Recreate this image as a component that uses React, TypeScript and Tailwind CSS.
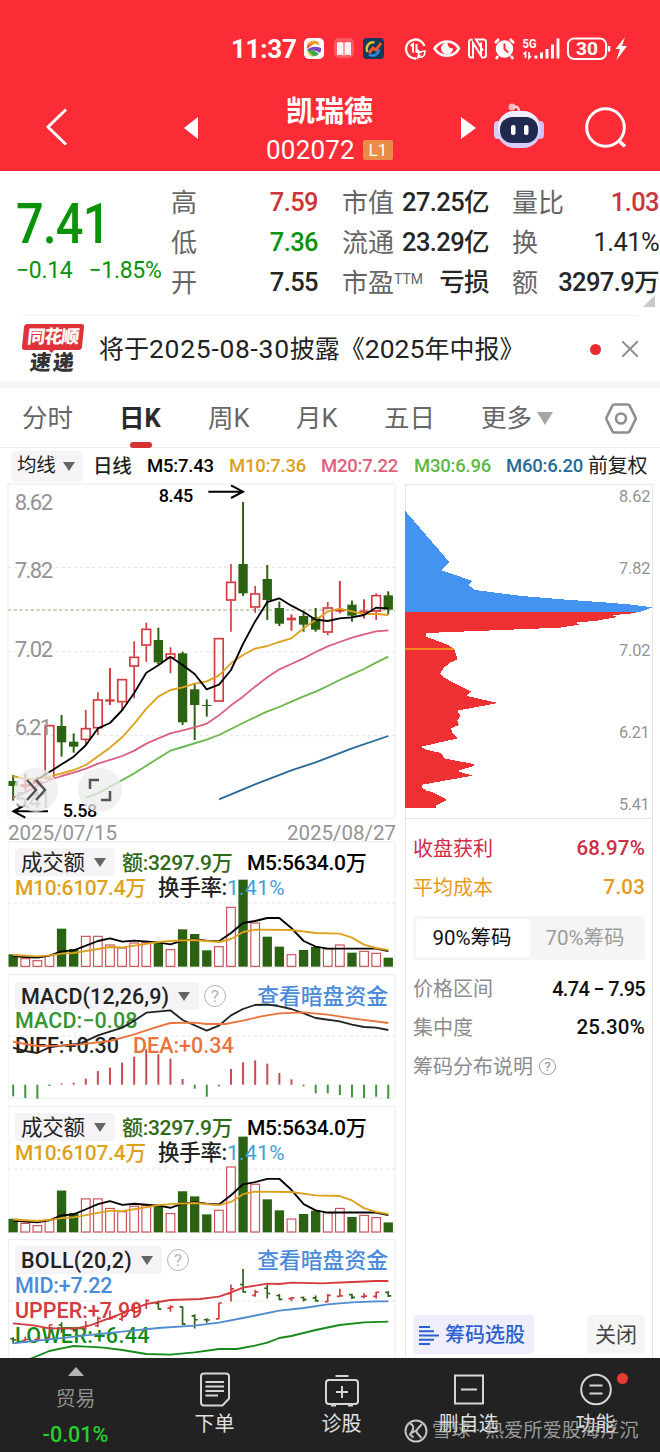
import type { ReactNode } from "react"

type Pt = [number, number]

// charts are drawn at three units per pixel
const cx = (i: number) => 39.5 + i * 36.3

const RED = "#d33b3f"
const GREEN = "#2b6312"

// up, high, low, body top, body bottom
const candles: [boolean, number, number, number, number][] = [
  [false, 885, 962, 903, 918],
  [true, 880, 932, 912, 922],
  [true, 890, 922, 902, 912],
  [true, 735, 897, 735, 897],
  [false, 705, 830, 738, 787],
  [false, 760, 818, 785, 800],
  [true, 690, 795, 744, 780],
  [true, 637, 765, 658, 745],
  [true, 564, 675, 658, 665],
  [true, 597, 690, 597, 667],
  [true, 484, 655, 530, 560],
  [true, 428, 545, 446, 497],
  [false, 443, 553, 480, 547],
  [true, 502, 580, 520, 535],
  [false, 515, 735, 520, 727],
  [false, 610, 780, 628, 675],
  [false, 658, 710, 675, 678],
  [true, 474, 665, 474, 665],
  [true, 252, 455, 305, 362],
  [false, 66, 348, 252, 340],
  [true, 318, 398, 340, 383],
  [false, 255, 420, 297, 360],
  [false, 365, 438, 384, 431],
  [true, 403, 452, 413, 421],
  [false, 395, 455, 408, 434],
  [false, 384, 455, 412, 449],
  [true, 366, 466, 382, 458],
  [true, 303, 400, 388, 395],
  [false, 362, 425, 374, 407],
  [true, 358, 416, 392, 398],
  [true, 340, 420, 345, 395],
  [false, 334, 403, 346, 389],
]

const volumeTops = [
  344, 355, 361, 346, 267, 328, 288, 288, 314, 323, 308, 306, 306, 328, 269, 283, 332, 319, 201, 120, 248, 291, 321,
  343, 331, 322, 326, 314, 339, 333, 339, 354,
]

const macdTips = [
  769, 774, 776, 738, 730, 728, 716, 693, 683, 668, 650, 628, 643, 656, 717, 746, 770, 739, 687, 667, 661, 671, 699,
  718, 739, 760, 760, 765, 772, 774, 770, 776,
]

const m5: Pt[] = [[100, 905], [145, 878], [185, 853], [221, 830], [258, 795], [294, 745], [330, 729], [367, 690], [403, 638], [439, 578], [475, 556], [511, 530], [548, 555], [584, 582], [620, 628], [657, 614], [693, 570], [729, 492], [765, 425], [802, 366], [838, 355], [874, 377], [911, 396], [947, 419], [983, 423], [1019, 415], [1056, 412], [1092, 405], [1128, 383], [1165, 385]]
const m10: Pt[] = [[39, 888], [75, 897], [112, 896], [148, 890], [185, 880], [221, 870], [258, 855], [294, 829], [330, 803], [367, 771], [403, 731], [439, 686], [475, 650], [511, 630], [548, 622], [584, 611], [620, 604], [657, 586], [693, 550], [729, 525], [765, 506], [802, 498], [838, 486], [874, 475], [911, 445], [947, 420], [983, 395], [1019, 386], [1056, 394], [1092, 402], [1128, 402], [1165, 405]]
const m20: Pt[] = [[39, 953], [75, 938], [112, 918], [148, 900], [185, 888], [221, 878], [258, 866], [294, 851], [367, 828], [403, 812], [439, 791], [475, 775], [511, 760], [548, 751], [584, 742], [620, 731], [657, 706], [693, 676], [729, 650], [765, 620], [802, 592], [838, 568], [874, 552], [911, 535], [947, 516], [983, 499], [1019, 486], [1056, 473], [1092, 463], [1128, 454], [1165, 451]]
const m30: Pt[] = [[258, 952], [294, 940], [330, 920], [367, 900], [403, 880], [439, 857], [511, 812], [548, 801], [620, 779], [657, 765], [729, 729], [802, 694], [838, 681], [874, 665], [911, 649], [947, 635], [983, 618], [1019, 600], [1056, 583], [1092, 567], [1128, 548], [1165, 530]]
const m60: Pt[] = [[657, 958], [765, 913], [874, 871], [947, 847], [1056, 805], [1165, 768]]

const volM5: Pt[] = [[39, 349], [75, 352], [112, 354], [148, 348], [185, 335], [221, 332], [258, 318], [294, 304], [330, 296], [367, 306], [403, 303], [475, 308], [511, 314], [548, 303], [584, 299], [620, 303], [657, 305], [693, 280], [729, 250], [765, 244], [802, 235], [838, 235], [874, 265], [911, 304], [947, 321], [983, 327], [1128, 327], [1165, 334]]
const volM10: Pt[] = [[39, 346], [112, 350], [148, 347], [185, 342], [221, 340], [294, 328], [330, 322], [367, 323], [403, 318], [475, 307], [511, 304], [584, 301], [657, 307], [693, 298], [729, 277], [765, 270], [874, 271], [947, 280], [1019, 282], [1056, 294], [1092, 315], [1128, 325], [1165, 331]]

const diff: Pt[] = [[39, 623], [75, 633], [112, 639], [148, 622], [185, 617], [240, 611], [294, 586], [367, 563], [403, 542], [439, 518], [511, 511], [548, 540], [620, 572], [657, 557], [693, 526], [729, 507], [765, 495], [802, 493], [838, 499], [874, 507], [911, 520], [947, 534], [1019, 544], [1056, 554], [1092, 561], [1128, 563], [1165, 570]]
const dea: Pt[] = [[39, 605], [75, 612], [112, 618], [185, 617], [240, 613], [330, 603], [403, 583], [457, 565], [511, 549], [584, 548], [620, 552], [675, 552], [729, 542], [784, 529], [838, 520], [911, 517], [983, 524], [1056, 535], [1165, 549]]

const bollUpper: Pt[] = [[39, 670], [100, 676], [148, 685], [230, 685], [270, 676], [294, 667], [367, 640], [439, 612], [511, 600], [600, 597], [657, 590], [693, 577], [729, 563], [802, 551], [838, 552], [874, 548], [965, 550], [1056, 546], [1128, 543], [1165, 543]]
const bollMid: Pt[] = [[39, 730], [148, 718], [258, 706], [367, 695], [475, 684], [584, 677], [657, 668], [729, 654], [838, 632], [911, 624], [983, 613], [1056, 607], [1128, 604], [1165, 604]]
const bollLower: Pt[] = [[90, 777], [148, 753], [185, 745], [221, 738], [258, 740], [310, 743], [367, 750], [439, 762], [511, 764], [584, 757], [657, 747], [711, 747], [765, 737], [802, 728], [838, 714], [874, 708], [947, 690], [1019, 675], [1092, 667], [1165, 665]]

const chipsBlue = "31,93 163,246 138,270 232,303 221,316 240,330 380,348 500,358 640,368 700,373 772,382 738,395 31,395"
const chipsRed =
  "31,395 738,395 700,402 650,405 669,411 605,422 540,428 553,434 495,443 320,450 93,459 93,470 160,495 178,508 188,538 165,548 145,565 135,580 145,592 228,635 216,648 309,669 187,692 197,708 187,720 191,735 168,745 172,760 189,775 78,800 90,808 138,819 150,836 237,852 237,858 186,873 232,887 82,914 80,922 95,933 110,935 157,960 125,975 122,983 31,983"

function Line({ pts, color, w = 5.5 }: { pts: Pt[]; color: string; w?: number }) {
  return <polyline points={pts.map((p) => p.join(",")).join(" ")} fill="none" stroke={color} strokeWidth={w} strokeLinejoin="round" />
}

function Dash({ y }: { y: number }) {
  return <path d={`M24 ${y}H1185`} stroke="#e4e4e4" strokeWidth="3" strokeDasharray="9 9" />
}

function StatusBar() {
  return (
    <div className="flex h-[76px] items-end pl-[231px]">
      <span className="mb-[12px] w-[73px] text-[26px] leading-[30px] font-bold tracking-[-0.3px]">11:37</span>
      <svg className="mb-[12px] h-8 w-[330px]" viewBox="304 32 330 32" fill="none">
        <rect x="304" y="38" width="20" height="21" rx="5" fill="#fff" />
        <path d="M307 49a7 7 0 0 1 12-6c-4 0-8 2-12 6Z" fill="#ef5a3c" />
        <path d="M308 45a7.500 7.500 0 0 1 8-4l5 5c-6-3-9-2-13-1Z" fill="#f3a52b" />
        <path d="M307 50c4-4 9-4 14-2a8 8 0 0 1-1 5c-4-3-8-3-13-3Z" fill="#7948c2" />
        <path d="M307 50c5 0 8 0 12 4a7 7 0 0 1-9 1Z" fill="#3aa655" />
        <path d="M307 50a8 8 0 0 0 7 7Z" fill="#f6c52d" />
        <rect x="334" y="38" width="20" height="20" rx="5" fill="#ff5960" />
        <path d="M337 42.500c2-.8 4.500-.8 6.500.5v12.500c-2-1-4.500-1-6.500 0ZM344.500 43c2-1.300 4.500-1.300 6.500-.5v13c-2-1-4.500-1-6.500 0Z" fill="#ffeef2" />
        <rect x="363" y="38" width="21" height="21" rx="4" fill="#143a5c" />
        <path d="M367.500 52a6.500 6.500 0 0 1 7-9.500" stroke="#d8c52f" strokeWidth="2.500" />
        <path d="M369 54.500a6.500 6.500 0 0 0 10-5" stroke="#2a8bd8" strokeWidth="2.500" />
        <path d="m369 53 4-5 3 2 5-7" stroke="#ef5a28" strokeWidth="3" />

        <g stroke="#fff" strokeWidth="2">
          <path d="M424.500 46a9.500 9.500 0 1 0-8.500 12.500" strokeWidth="2.300" />
          <path d="m410.500 46 2.500-2v8.500M416.500 44v8h3l-2.500-2" />
          <path d="M418 57c0-4 2-6 7-6 0 5-2.500 7-7 6Zm-1.500 2 4-4" strokeWidth="1.600" />
          <path d="M434.500 48.500c6-9.500 19-9.500 24.500 0-5.500 9.500-18.500 9.500-24.500 0Z" strokeWidth="2.500" />
          <path d="M447 43a5.500 5.500 0 1 0 5.500 5.500c-2 1-5-1-5.500-5.500Z" fill="#fff" strokeWidth="1" />
          <path d="M472.500 39.500h-1c-1.500 0-2.500 1-2.500 2.500v13c0 1.500 1 2.500 2.500 2.500h1.500V43l8 12.500V42.500M482 57.500h1.500c1.500 0 2.500-1 2.500-2.500V42c0-1.500-1-2.500-2.500-2.500H476l7 11" strokeWidth="2" />
        </g>
        <circle cx="504.500" cy="49" r="8.700" fill="#fff" />
        <path d="m495 43 4-4M514 43l-4-4M498 56l-2 3M511 56l2 3" stroke="#fff" strokeWidth="2.500" />
        <path d="M504.500 43.500V49l3.500 3.500" stroke="#fb2c36" strokeWidth="2" />
        <text x="522.500" y="48" fontSize="12.500" fontWeight="700" fill="#fff" textLength="14" lengthAdjust="spacingAndGlyphs">5G</text>
        <path d="m523.500 54 2-1.500V58M529 52v6l2-2" stroke="#fff" strokeWidth="1.700" />
        <path d="M536 55.500V58.500M541.500 52.500v6M547 49v9.500M552.500 44.500v14M558 38.500v20" stroke="#fff" strokeWidth="2.900" />
        <rect x="568" y="38.500" width="38" height="20.500" rx="6" stroke="#fff" strokeWidth="2" />
        <text x="576" y="55" fontSize="18" fontWeight="700" fill="#fff" textLength="22" lengthAdjust="spacingAndGlyphs">30</text>
        <path d="M609 46v5.500" stroke="#fff" strokeWidth="2.500" />
        <path d="m625 37-9.500 12h4.500l-3.500 11 10.500-14H622Z" fill="#fff" />
      </svg>
    </div>
  )
}

function Header() {
  return (
    <header className="h-[171px] bg-[#fb2c36] text-white">
      <StatusBar />
      <div className="flex h-[95px] items-start">
        <svg className="mt-[31px] ml-[45px] h-10 w-6" viewBox="0 0 24 40" fill="none" stroke="#fff" strokeWidth="3">
          <path d="M21 2.500 3 20l18 17.500" />
        </svg>
        <svg className="mt-[41px] ml-[115px] h-[22px] w-[14px]" viewBox="0 0 14 22">
          <path d="M14 0v22L0 11Z" fill="#fff" />
        </svg>
        <div className="flex w-[263px] flex-col items-center">
          <h1 className="mt-[19px] text-[29px] leading-[34px] font-semibold">凯瑞德</h1>
          <div className="mt-[6px] flex items-center gap-2">
            <span className="text-[26px] leading-[30px] tracking-[0.2px]">002072</span>
            <span className="flex h-5 w-[30px] items-center justify-center rounded-xs bg-[#e88c48] text-[17px] leading-5">L1</span>
          </div>
        </div>
        <svg className="mt-[41px] h-[22px] w-[15px]" viewBox="0 0 15 22">
          <path d="M0 0v22l15-11Z" fill="#fff" />
        </svg>
        <svg className="mt-[26px] ml-[17px] h-[48px] w-[52px]" viewBox="0 0 52 48">
          <circle cx="19" cy="5" r="3.500" fill="#f8b2b9" />
          <path d="M20 5c5-1 6 1 6.500 6" stroke="#fbd7de" strokeWidth="2.500" fill="none" />
          <rect x="1" y="19" width="8" height="18" rx="4" fill="#d9cdfb" />
          <rect x="43" y="19" width="8" height="18" rx="4" fill="#cdbffa" />
          <rect x="4" y="9" width="44" height="37" rx="18" fill="#d8ccfb" />
          <rect x="5" y="9" width="41" height="32" rx="16" fill="#f1ecff" />
          <rect x="7" y="15" width="38" height="26" rx="12" fill="#20294f" />
          <rect x="18" y="23" width="4.500" height="10" rx="2" fill="#fff" />
          <rect x="31" y="23" width="4.500" height="10" rx="2" fill="#fff" />
        </svg>
        <svg className="mt-[30px] ml-[40px] h-[44px] w-[44px]" viewBox="0 0 44 44" fill="none" stroke="#fff" strokeWidth="3">
          <circle cx="20.500" cy="21.500" r="18.800" />
          <path d="m33 34 7 6.500" strokeWidth="3.500" />
        </svg>
      </div>
    </header>
  )
}

function QuoteRow({ label, value, className = "" }: { label: ReactNode; value: string; className?: string }) {
  return (
    <div className="flex h-10 items-center justify-between whitespace-nowrap">
      <span className="text-[26px] text-[#666]">{label}</span>
      <span className={`text-[25.500px] font-medium tracking-[-0.6px] ${className}`}>{value}</span>
    </div>
  )
}

function Quote() {
  return (
    <section className="relative flex h-[144px] pt-[12px] leading-none text-[#262626]">
      <div className="w-[171px] pl-4 text-[#0a930a]">
        <p className="w-[108px] origin-left scale-x-[0.87] pt-[11px] text-[56px] leading-[60px] font-medium tracking-[-0.8px]">7.41</p>
        <p className="mt-[3px] flex gap-4 text-[23px] leading-7 tracking-[-0.3px] whitespace-nowrap">
          <span>−0.14</span>
          <span>−1.85%</span>
        </p>
      </div>
      <div className="w-[147px]">
        <QuoteRow label="高" value="7.59" className="text-[#cf3438]" />
        <QuoteRow label="低" value="7.36" className="text-[#0a930a]" />
        <QuoteRow label="开" value="7.55" />
      </div>
      <div className="ml-[24px] w-[147px]">
        <QuoteRow label="市值" value="27.25亿" />
        <QuoteRow label="流通" value="23.29亿" />
        <QuoteRow label={<>市盈<sup className="top-[-8px] text-[14px]">TTM</sup></>} value="亏损" />
      </div>
      <div className="ml-[23px] w-[147px]">
        <QuoteRow label="量比" value="1.03" className="text-[#cf3438]" />
        <QuoteRow label="换" value="1.41%" className="font-normal" />
        <QuoteRow label="额" value="3297.9万" />
      </div>
      <svg className="absolute right-[5px] bottom-[8px] h-3 w-3" viewBox="0 0 12 12">
        <path d="M12 0v12H0Z" fill="#c9c9c9" />
      </svg>
    </section>
  )
}

function Notice() {
  return (
    <section className="flex h-[66px] items-center">
      <div className="ml-[23px] w-[60px] text-center text-[18px] leading-none font-black">
        <div className="relative h-[26px] -skew-x-6 rounded-[3px] bg-[#e0323a] pt-[4px] tracking-[-1px] text-white">
          同花顺
          <svg className="absolute top-[25px] left-[26px] h-1 w-2" viewBox="0 0 8 4">
            <path d="M0 0h8L4 4Z" fill="#e0323a" />
          </svg>
        </div>
        <div className="mt-[3px] -skew-x-6 text-[21px] tracking-[2px] text-[#333]">速递</div>
      </div>
      <p className="ml-[16px] w-[491px] pt-px text-[25px] leading-8 whitespace-nowrap text-[#222]">
        将于<span className="text-[26.500px] tracking-[0.7px]">2025-08-30</span>披露《
        <span className="text-[26.500px]">2025</span>年中报》
      </p>
      <span className="h-[11px] w-[11px] rounded-full bg-[#e82c30]" />
      <svg className="ml-[21px] h-4 w-4" viewBox="0 0 16 16" stroke="#8f8f8f" strokeWidth="2">
        <path d="m0 0 16 16M16 0 0 16" />
      </svg>
    </section>
  )
}

function Tabs() {
  return (
    <nav className="flex h-[60px] items-center border-b border-[#eee] pt-[2px] text-[25.500px] leading-none text-[#666]">
      <span className="w-[96px] pl-[22px]">分时</span>
      <span className="relative w-[112px] pl-[23px] font-bold text-[#2a2a2a]">
        日K
        <i className="absolute top-[36px] left-[34px] h-[6px] w-[22px] rounded-full bg-[#d73035]" />
      </span>
      <span className="w-[88px]">周K</span>
      <span className="w-[88px]">月K</span>
      <span className="w-[97px]">五日</span>
      <span className="flex w-[123px] items-center gap-[5px]">
        更多
        <svg className="h-[13px] w-4" viewBox="0 0 16 13">
          <path d="M0 0h16L8 13Z" fill="#a6a6a6" />
        </svg>
      </span>
      <svg className="h-[34px] w-[34px]" viewBox="0 0 34 34" fill="none" stroke="#8e8e8e" strokeWidth="2.600">
        <path d="M10.500 2.500h13c1 0 1.500.3 2 1l6 12c.4.800.4 1.200 0 2l-6 12c-.5.700-1 1-2 1h-13c-1 0-1.500-.3-2-1l-6-12c-.4-.8-.4-1.200 0-2l6-12c.5-.7 1-1 2-1Z" />
        <circle cx="17" cy="16.500" r="5" />
      </svg>
    </nav>
  )
}

function Arrow() {
  return (
    <svg className="h-[9px] w-3" viewBox="0 0 12 9">
      <path d="M0 0h12L6 9Z" fill="#666" />
    </svg>
  )
}

function MaRow() {
  return (
    <div className="flex h-9 items-center text-[18.500px] leading-none font-medium tracking-[-0.2px] whitespace-nowrap">
      <span className="ml-[11px] flex h-[31px] w-[72px] items-center gap-[7px] rounded bg-[#f6f4f6] pl-[6px] text-[19.500px] font-normal text-[#222]">
        均线
        <Arrow />
      </span>
      <span className="ml-[10px] w-[54px] pt-px text-[19.500px] text-[#222]">日线</span>
      <span className="w-[82px] text-black">M5:7.43</span>
      <span className="w-[92px] text-[#dca01a]">M10:7.36</span>
      <span className="w-[93px] text-[#e0607a]">M20:7.22</span>
      <span className="w-[92px] text-[#5cb843]">M30:6.96</span>
      <span className="w-[82px] text-[#25699a]">M60:6.20</span>
      <span className="text-[20px] font-normal text-[#222]">前复权</span>
    </div>
  )
}

function PriceChart() {
  return (
    <div className="relative h-[335px]">
      <svg className="h-[335px] w-[388px] overflow-visible" viewBox="24 12 1164 1005" fontSize="66">
        <rect x="24" y="12" width="1161" height="1003" fill="none" stroke="#ebebeb" strokeWidth="3" />
        <Dash y={262} />
        <Dash y={515} />
        <Dash y={767} />
        <path d="M24 390H1185" stroke="#c4bea0" strokeWidth="4" strokeDasharray="10 7" />
        {candles.map(([up, high, low, top, bottom], i) => {
          const x = cx(i)
          const body = Math.max(bottom - top, 3)
          const hollow = up && body > 10
          return (
            <g key={i} stroke={up ? RED : GREEN} strokeWidth={hollow ? 5 : 6} fill={up ? RED : GREEN}>
              {hollow ? <path d={`M${x} ${high}V${top}M${x} ${bottom}V${low}`} /> : <path d={`M${x} ${high}V${low}`} />}
              {hollow ? (
                <rect x={x - 13} y={top + 2} width="26" height={body - 4} fill="none" />
              ) : (
                <rect x={x - 14} y={top} width="28" height={body} stroke="none" />
              )}
            </g>
          )
        })}
        <Line pts={m60} color="#2b6a98" />
        <Line pts={m30} color="#69b84c" />
        <Line pts={m20} color="#dc5f7d" />
        <Line pts={m10} color="#dda11f" />
        <Line pts={m5} color="#000" />
        <g fill="#949494">
          <text x="44" y="90" textLength="115">8.62</text>
          <text x="44" y="294" textLength="115">7.82</text>
          <text x="44" y="530" textLength="115">7.02</text>
          <text x="44" y="766" textLength="112">6.21</text>
          <text x="44" y="984" textLength="110">5.41</text>
        </g>
        <g fontSize="54" fill="#000" fontWeight="500">
          <text x="476" y="67" textLength="104">8.45</text>
          <text x="188" y="1011" textLength="104">5.58</text>
        </g>
        <path d="M625 35h104M693 16l36 19-36 19M144 994H40M76 975l-36 19 36 19" fill="none" stroke="#000" strokeWidth="6" />
      </svg>
      <span className="absolute top-[284px] left-[6px] flex h-[44px] w-[44px] items-center justify-center rounded-full bg-[#ececec]/75">
        <svg className="h-[22px] w-[22px]" viewBox="0 0 22 22" fill="none" stroke="#555" strokeWidth="2.500">
          <path d="m2 1 9 10-9 10M11 1l9 10-9 10" />
        </svg>
      </span>
      <span className="absolute top-[284px] left-[70px] flex h-[44px] w-[44px] items-center justify-center rounded-full bg-[#ececec]/75">
        <svg className="h-6 w-6" viewBox="0 0 24 24" fill="none" stroke="#555" strokeWidth="2.500">
          <path d="M2 11V2h9M22 13v9h-9" />
        </svg>
      </span>
    </div>
  )
}

function Picker({ children, className }: { children: ReactNode; className: string }) {
  return (
    <span className={`flex h-7 items-center rounded bg-[#f5f3f5] pl-[6px] text-[#222] ${className}`}>
      <span className="flex-1 pt-px">{children}</span>
      <Arrow />
    </span>
  )
}

function VolumePanel({ base, scale, dash, top }: { base: number; scale: number; dash: number; top: number }) {
  const sy = (y: number) => base - (381 - y) * scale
  const move = (pts: Pt[]) => pts.map(([x, y]): Pt => [x, sy(y)])
  return (
    <div className="relative h-[127px]">
      <svg className="absolute inset-0 h-[127px] w-[388px]" viewBox={`24 ${top} 1164 381`}>
        <rect x="24" y={top + 2} width="1161" height="377" fill="none" stroke="#ebebeb" strokeWidth="3" />
        <Dash y={dash} />
        {volumeTops.map((v, i) =>
          candles[i][0] ? (
            <rect key={i} x={cx(i) - 13} y={sy(v) + 2} width="26" height={base - sy(v) - 3} fill="#fff" stroke="#cc5157" strokeWidth="3.500" />
          ) : (
            <rect key={i} x={cx(i) - 14} y={sy(v)} width="28" height={base - sy(v)} fill={GREEN} />
          ),
        )}
        <Line pts={move(volM5)} color="#000" />
        <Line pts={move(volM10)} color="#dda11f" />
      </svg>
      <div className="relative pt-[7px] pl-[7px] text-[21px] leading-none font-medium tracking-[-0.3px] whitespace-nowrap">
        <div className="flex items-center">
          <Picker className="w-[100px] pr-[9px] text-[21.500px] font-normal">成交额</Picker>
          <span className="ml-[7px] w-[125px] pt-[2px] text-[#2f6a18]">额:3297.9万</span>
          <span className="pt-[2px] text-black">M5:5634.0万</span>
        </div>
        <div className="flex h-[24px] items-center">
          <span className="w-[143px] text-[#dfa11c]">M10:6107.4万</span>
          <span className="text-[21.500px] text-[#222]">换手率:</span>
          <span className="font-normal tracking-[0.3px] text-[#3f9fd8]">1.41%</span>
        </div>
      </div>
    </div>
  )
}

function Help({ className }: { className: string }) {
  return (
    <span className={`flex items-center justify-center rounded-full border-[1.500px] leading-none font-normal ${className}`}>?</span>
  )
}

function MacdPanel() {
  return (
    <div className="relative h-[125px]">
      <svg className="absolute inset-0 h-[125px] w-[388px]" viewBox="24 402 1164 375">
        <rect x="24" y="404" width="1161" height="371" fill="none" stroke="#ebebeb" strokeWidth="3" />
        <Dash y={588} />
        {macdTips.map((v, i) => (
          <path key={i} d={`M${cx(i)} 734V${v}`} stroke={v > 734 ? "#3f9440" : "#c94a50"} strokeWidth="6" />
        ))}
      </svg>
      <div className="relative pt-[8px] pl-[7px] text-[21.500px] leading-none font-medium whitespace-nowrap">
        <div className="flex items-center">
          <Picker className="w-[184px] pr-[9px] tracking-[0.1px] text-[#111]">MACD(12,26,9)</Picker>
          <Help className="ml-[5px] h-[22px] w-[22px] border-[#b5b5b5] text-[17px] text-[#b5b5b5]" />
          <span className="ml-auto pt-px pr-[8px] text-[21.800px] text-[#4b8bdb]">查看暗盘资金</span>
        </div>
        <div className="mt-[-1px] flex h-[24px] items-center tracking-[0.1px] text-[#35952f]">MACD:−0.08</div>
        <div className="flex h-[26px] items-center">
          <span className="w-[118px] text-[#222]">DIFF:+0.30</span>
          <span className="text-[#ea733e]">DEA:+0.34</span>
        </div>
      </div>
      <svg className="absolute inset-0 h-[125px] w-[388px]" viewBox="24 402 1164 375">
        <Line pts={diff} color="#222" />
        <Line pts={dea} color="#ea733e" />
      </svg>
    </div>
  )
}

function BollPanel() {
  const sy = (y: number) => 507 + (y - 66) * 0.25
  return (
    <div className="relative h-[119px] overflow-hidden">
      <svg className="absolute inset-0 h-[119px] w-[388px]" viewBox="24 417 1164 357">
        <path d="M25 800V419H1185V800" fill="none" stroke="#ebebeb" strokeWidth="3" />
        <Dash y={603} />
      </svg>
      <div className="relative pt-[7px] pl-[7px] text-[21.500px] leading-none font-medium whitespace-nowrap">
        <div className="flex items-center">
          <Picker className="w-[147px] pr-[9px] tracking-[0.3px] text-[#111]">BOLL(20,2)</Picker>
          <Help className="ml-[5px] h-[22px] w-[22px] border-[#b5b5b5] text-[17px] text-[#b5b5b5]" />
          <span className="ml-auto pt-px pr-[8px] text-[21.800px] text-[#4b8bdb]">查看暗盘资金</span>
        </div>
        <div className="mt-[-1px] flex h-[25px] items-center tracking-[-0.2px] text-[#4b8bdb]">MID:+7.22</div>
        <div className="flex h-[25px] items-center text-[#d33b3f]">UPPER:+7.99</div>
        <div className="flex h-[25px] items-center tracking-[0.4px] text-[#118a14]">LOWER:+6.44</div>
      </div>
      <svg className="absolute inset-0 h-[119px] w-[388px]" viewBox="24 417 1164 357">
        {candles.map(([up, high, low, top, bottom], i) => {
          const x = cx(i)
          const open = sy(up ? bottom : top)
          const close = sy(up ? top : bottom)
          return (
            <path key={i} d={`M${x} ${sy(high)}V${sy(low)}M${x - 9} ${open}H${x}M${x} ${close}h9`} fill="none" stroke={up ? RED : GREEN} strokeWidth="5" />
          )
        })}
        <Line pts={bollUpper} color="#d33b3f" />
        <Line pts={bollMid} color="#4f8cd0" />
        <Line pts={bollLower} color="#168a1a" />
      </svg>
    </div>
  )
}

function ChipRow({ label, value, className }: { label: string; value: string; className: string }) {
  return (
    <div className={`flex h-[39px] items-center justify-between ${className}`}>
      <span>{label}</span>
      <span className="text-[20.500px] font-medium tracking-[0.2px]">{value}</span>
    </div>
  )
}

function ChipPanel() {
  return (
    <aside className="flex h-[874px] w-[248px] flex-col border-x border-t border-[#e6e6e6] text-[20px] leading-none">
      <svg className="-ml-px h-[334px] w-[248px]" viewBox="30 15 744 1002" fontSize="49" fill="#949494" shapeRendering="crispEdges">
        <polygon points={chipsBlue} fill="#4393f0" />
        <polygon points={chipsRed} fill="#ee3033" />
        <rect x="31" y="504" width="147" height="5" fill="#f48a1e" />
        <path d="M30 1014H774" stroke="#e6e6e6" strokeWidth="3" />
        <text x="672" y="66" textLength="94">8.62</text>
        <text x="672" y="282" textLength="94">7.82</text>
        <text x="672" y="528" textLength="94">7.02</text>
        <text x="672" y="773" textLength="92">6.21</text>
        <text x="672" y="991" textLength="92">5.41</text>
      </svg>
      <div className="flex flex-col px-[7px] pt-[10px]">
        <ChipRow label="收盘获利" value="68.97%" className="text-[#cf2b45]" />
        <ChipRow label="平均成本" value="7.03" className="text-[#e8981a]" />
        <div className="my-[9px] flex h-[44px] rounded bg-[#f5f5f5] p-[3px]">
          <span className="flex w-[114px] items-center justify-center rounded bg-white pr-[2px] text-[20.500px] text-[#111]">90%筹码</span>
          <span className="flex flex-1 items-center justify-center pr-[2px] text-[20.500px] text-[#9c9c9c]">70%筹码</span>
        </div>
      </div>
      <div className="px-[7px] text-[#8c8c8c]">
        <div className="flex h-[39px] items-center justify-between">
          价格区间<span className="font-medium tracking-[-0.7px] text-[#111]">4.74 − 7.95</span>
        </div>
        <div className="flex h-[39px] items-center justify-between">
          集中度<span className="text-[20.500px] font-medium tracking-[0.2px] text-[#111]">25.30%</span>
        </div>
        <div className="flex h-[39px] items-center gap-[6px]">
          筹码分布说明
          <Help className="h-[17px] w-[17px] border-[#999] text-[13px]" />
        </div>
      </div>
      <div className="mt-auto mb-[4px] flex h-[39px] justify-between px-[7px]">
        <span className="flex w-[121px] items-center gap-[6px] rounded bg-[#eeeefc] pt-px pl-[6px] font-medium text-[#2e5fd0]">
          <svg className="h-[19px] w-5" viewBox="0 0 20 19" stroke="#2e5fd0" strokeWidth="2">
            <path d="M0 1h11M0 5.200h15M0 9.500h20M0 13.800h15M0 18h11" />
          </svg>
          筹码选股
        </span>
        <span className="flex w-[58px] items-center justify-center rounded bg-[#f5f5f5] pt-px text-[21px] text-[#444]">关闭</span>
      </div>
    </aside>
  )
}

function NavItem({ label, icon }: { label: string; icon: ReactNode }) {
  return (
    <span className="flex w-[127px] flex-col items-center text-[20px] leading-6 text-[#e0e0e0]">
      <svg className="mt-[13px] mb-[5px] h-9 w-9" viewBox="0 0 36 36" fill="none" stroke="#d5d5d5" strokeWidth="2">
        {icon}
      </svg>
      {label}
    </span>
  )
}

function BottomNav() {
  return (
    <footer className="relative flex h-[94px] bg-[#222]">
      <div className="flex w-[151px] flex-col items-center">
        <svg className="mt-[9px] h-[9px] w-4" viewBox="0 0 16 9">
          <path d="M0 9h16L8 0Z" fill="#b5b5b5" />
        </svg>
        <span className="mt-[11px] text-[20px] leading-6 text-[#8e8e8e]">贸易</span>
        <span className="mt-[12px] text-[21.500px] leading-6 font-medium text-[#23d12d]">-0.01%</span>
      </div>
      <NavItem
        label="下单"
        icon={<path d="M7 2.500h22a3 3 0 0 1 3 3v22l-6.500 7H7a3 3 0 0 1-3-3v-26a3 3 0 0 1 3-3ZM8.500 11H27M8.500 15.500H27M8.500 20H27M8.500 24.500H21" />}
      />
      <NavItem
        label="诊股"
        icon={<path d="M5 9h26q3 0 3 3v18q0 3-3 3H5q-3 0-3-3V12q0-3 3-3ZM11.500 5h13M18 15v12M12 21h12M7 34.500h5M24 34.500h5" />}
      />
      <NavItem label="删自选" icon={<path d="M4 4.500h28v28H4ZM10 18.500h16" />} />
      <NavItem
        label="功能"
        icon={
          <>
            <circle cx="18" cy="18.500" r="14.800" />
            <path d="M11.500 14.500h13M11.500 22.500h13" />
          </>
        }
      />
      <i className="absolute top-[15px] right-[32px] h-[11px] w-[11px] rounded-full bg-[#e83a34]" />
      <div className="absolute top-[59px] left-[404px] flex items-center gap-[4px] text-[19.200px] leading-7 whitespace-nowrap text-[#c2c2c2]/75">
        <svg className="h-6 w-6" viewBox="0 0 24 24" fill="none" stroke="#c2c2c2" strokeWidth="2">
          <circle cx="12" cy="12" r="10.500" />
          <path d="M6 4.500c3.500 1.500 4 4 2.500 7L6 15.500l3.500 3M18 5l-5 5.500c-1 1.500-.5 3 .5 4l4 4.500M6 15l7-4" />
        </svg>
        <span>雪球 · 热爱所爱股海浮沉</span>
      </div>
    </footer>
  )
}

export default function App() {
  return (
    <main className="h-[1452px] w-[660px] overflow-hidden bg-white font-[Roboto,'Noto_Sans_CJK_SC',sans-serif]">
      <Header />
      <Quote />
      <div className="mx-[22px] h-px bg-[#f1f1f1]" />
      <Notice />
      <div className="h-[6px] bg-[#f6f6f6]" />
      <Tabs />
      <MaRow />
      <div className="flex justify-between pr-[7px] pl-2">
        <div className="w-[388px]">
          <PriceChart />
          <div className="flex h-[22px] items-end justify-between text-[20.500px] leading-[15px] text-[#949494]">
            <span>2025/07/15</span>
            <span>2025/08/27</span>
          </div>
          <VolumePanel base={381} scale={1} dash={190} top={4} />
          <div className="h-[6px]" />
          <MacdPanel />
          <div className="h-[7px]" />
          <VolumePanel base={396} scale={1.1} dash={206} top={17} />
          <div className="h-[6px]" />
          <BollPanel />
        </div>
        <ChipPanel />
      </div>
      <BottomNav />
    </main>
  )
}
